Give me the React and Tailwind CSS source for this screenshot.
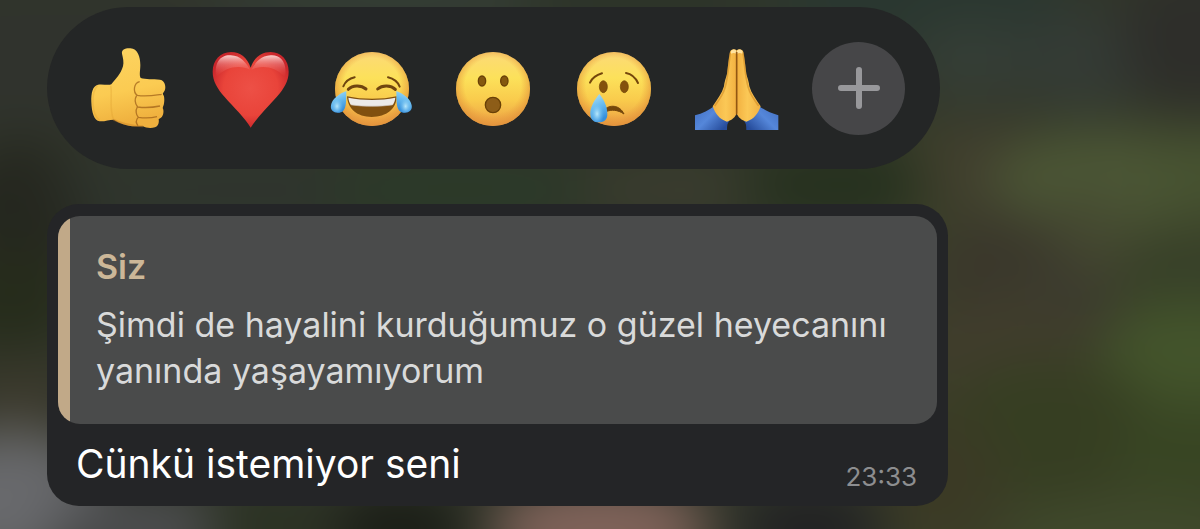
import React, { useState } from "react";

// soft colour patches of the blurred wallpaper: [cx, cy, rx, ry, colour]
const patches = [
  [60, 60, 260, 70, "#30332d"],
  [20, 210, 70, 70, "#25271f"],
  [10, 300, 70, 50, "#262c1b"],
  [250, 190, 200, 30, "#2e342e"],
  [400, 0, 200, 20, "#35403a"],
  [460, 190, 140, 30, "#2a3a28"],
  [640, 0, 120, 20, "#293229"],
  [680, 190, 100, 30, "#3a3c2e"],
  [840, 185, 100, 34, "#25311d"],
  [920, 0, 150, 60, "#2a3730"],
  [970, 60, 60, 40, "#353e36"],
  [1080, 60, 70, 50, "#343b35"],
  [1200, 40, 80, 70, "#2e2e2a"],
  [990, 170, 70, 50, "#413f2e"],
  [1110, 180, 120, 50, "#4b5635"],
  [1210, 175, 60, 45, "#475331"],
  [1080, 240, 50, 45, "#454931"],
  [1000, 275, 70, 60, "#3a372b"],
  [1060, 300, 60, 40, "#3c3b2e"],
  [1190, 275, 70, 40, "#374028"],
  [1000, 350, 90, 50, "#403d2c"],
  [1190, 355, 90, 55, "#43542b"],
  [1050, 430, 110, 70, "#363e22"],
  [1190, 450, 80, 50, "#384523"],
  [940, 480, 60, 70, "#3b3a25"],
  [1130, 540, 120, 40, "#404a2c"],
  [20, 400, 60, 40, "#3b392c"],
  [10, 500, 100, 70, "#68696c"],
  [140, 530, 90, 40, "#4c4d4f"],
  [270, 530, 60, 40, "#2b3223"],
  [400, 530, 70, 40, "#1a1d16"],
  [600, 530, 110, 50, "#80635a"],
  [810, 530, 70, 40, "#212123"],
];

function Wallpaper() {
  return (
    <svg
      className="absolute inset-0 h-full w-full"
      viewBox="0 0 1200 529"
      preserveAspectRatio="none"
      aria-hidden="true"
    >
      <defs>
        <filter id="soft" x="-20%" y="-20%" width="140%" height="140%" colorInterpolationFilters="sRGB">
          <feGaussianBlur stdDeviation="26" />
        </filter>
      </defs>
      <rect width="1200" height="529" fill="#30352b" />
      <g filter="url(#soft)">
        <rect x="-100" y="-100" width="1400" height="729" fill="#31362a" />
        <rect x="900" y="120" width="400" height="509" fill="#3c4129" />
        {patches.map(([cx, cy, rx, ry, color]) => (
          <ellipse key={`${cx}-${cy}`} cx={cx} cy={cy} rx={rx} ry={ry} fill={color} />
        ))}
      </g>
    </svg>
  );
}

function EmojiDefs() {
  return (
    <svg className="absolute h-0 w-0" aria-hidden="true">
      <defs>
        <linearGradient id="face" x1="0" y1="0" x2="0" y2="1">
          <stop offset="0" stopColor="#fcd978" />
          <stop offset="0.35" stopColor="#fce15a" />
          <stop offset="0.65" stopColor="#f9cb4c" />
          <stop offset="1" stopColor="#ec9f45" />
        </linearGradient>
        <radialGradient id="faceEdge" cx="0.5" cy="0.46" r="0.54">
          <stop offset="0.7" stopColor="#e8963a" stopOpacity="0" />
          <stop offset="1" stopColor="#e0903a" stopOpacity="0.8" />
        </radialGradient>
        <linearGradient id="tear" x1="0" y1="0" x2="0.3" y2="1">
          <stop offset="0" stopColor="#b5e4f5" />
          <stop offset="0.5" stopColor="#6bbdf0" />
          <stop offset="1" stopColor="#358fdd" />
        </linearGradient>
        <radialGradient id="tearShine" cx="0.4" cy="0.7" r="0.4">
          <stop offset="0" stopColor="#b9e8fb" />
          <stop offset="1" stopColor="#6bbdf0" stopOpacity="0" />
        </radialGradient>
        <linearGradient id="skin" x1="0" y1="0" x2="0.2" y2="1">
          <stop offset="0" stopColor="#fcd462" />
          <stop offset="0.6" stopColor="#fbcb52" />
          <stop offset="1" stopColor="#efb03e" />
        </linearGradient>
        <radialGradient id="heart" cx="0.5" cy="0.48" r="0.55">
          <stop offset="0" stopColor="#ed5046" />
          <stop offset="0.65" stopColor="#e9443a" />
          <stop offset="1" stopColor="#c9262b" />
        </radialGradient>
        <linearGradient id="gloss" x1="0" y1="0" x2="0" y2="1">
          <stop offset="0" stopColor="#ffe3e0" stopOpacity="0.9" />
          <stop offset="0.4" stopColor="#f59a98" stopOpacity="0.5" />
          <stop offset="1" stopColor="#ed5046" stopOpacity="0" />
        </linearGradient>
        <linearGradient id="palm" x1="0" y1="0" x2="1" y2="0">
          <stop offset="0" stopColor="#f2b244" />
          <stop offset="0.55" stopColor="#fbc856" />
          <stop offset="1" stopColor="#f2b040" />
        </linearGradient>
        <linearGradient id="sleeve" x1="0" y1="0" x2="1" y2="0.7">
          <stop offset="0" stopColor="#416ec0" />
          <stop offset="0.5" stopColor="#5587da" />
          <stop offset="1" stopColor="#274d9c" />
        </linearGradient>
        <filter id="smooth" x="-20%" y="-20%" width="140%" height="140%" colorInterpolationFilters="sRGB">
          <feGaussianBlur stdDeviation="2" />
        </filter>
      </defs>
    </svg>
  );
}

function Emoji({ children }) {
  return (
    <svg className="h-[105px] w-[100px]" viewBox="0 0 300 315" aria-hidden="true">
      {children}
    </svg>
  );
}

function Face() {
  return (
    <>
      <circle cx="150" cy="159" r="111" fill="url(#face)" />
      <circle cx="150" cy="159" r="111" fill="url(#faceEdge)" />
    </>
  );
}

function ThumbsUp() {
  return (
    <Emoji>
      <path
        d="M54 146C38 150 33 170 34 198c1 31 8 56 25 58 15 1 29-5 42-5 18 10 36 19 66 20h22c9 5 24 6 36 3 9-3 13-13 11-25 10-3 16-14 14-28-2-4-2-6-1-9 4-5 6-29 1-35-2-3-2-5 1-8 10-11 5-36-11-38-22-2-43 0-58-5-5-9-1-22-1-39 0-24-8-49-30-50-15-1-27 4-25 16 3 14 6 24 3 38-7 24-22 38-35 54-9 4-24-1-40 1Z"
        fill="url(#skin)"
      />
      <path d="M92 150c6 20-6 70 9 101M53 148c-20 20-20 86 6 106" fill="none" stroke="#db9a2b" strokeWidth="5" opacity="0.28" filter="url(#smooth)" />
      <path d="M100 251c24 12 46 19 89 20" fill="none" stroke="#c97f22" strokeWidth="6" opacity="0.4" filter="url(#smooth)" />
      <g fill="none" stroke="#9b5c16" strokeWidth="4" opacity="0.7" filter="url(#smooth)">
        <path d="M179 137c-18 4-21 31-7 41 25 5 52 0 73-3" />
        <path d="M170 178c-7 12-4 26 3 35 24 3 48 1 67-3" />
        <path d="M172 213c-6 10-4 24 3 31 20 3 40 2 56-2" />
        <path d="M174 245c-7 8-6 17 0 24" />
      </g>
    </Emoji>
  );
}

function Heart() {
  return (
    <Emoji>
      <path
        d="M149 275C132 246 98 214 71 183 49 158 35 135 35 107c0-34 23-59 55-59 28 0 49 17 59 47 10-30 32-47 60-47 32 0 54 25 54 59 0 28-14 51-36 76-28 31-60 63-78 92Z"
        fill="url(#heart)"
      />
      <path d="M46 124C38 78 60 56 89 58c30 1 45 21 58 43-25-12-68-14-101 23Z" fill="url(#gloss)" filter="url(#smooth)" />
      <path d="M252 124c8-46-14-68-43-66-30 1-45 21-58 43 25-12 68-14 101 23Z" fill="url(#gloss)" filter="url(#smooth)" />
    </Emoji>
  );
}

function Joy() {
  return (
    <Emoji>
      <Face />
      <g fill="none" stroke="#70450f" strokeLinecap="round">
        <path d="M64 151c6-14 16-23 34-27M198 124c17 4 29 13 35 28" strokeWidth="6" />
        <path d="M79 160c12-13 38-14 53-1M167 159c14-13 40-12 53 1" strokeWidth="9" />
      </g>
      <path d="M75 181c47 10 104 10 149 0 0 37-30 62-75 62-44 0-72-25-74-62Z" fill="#80500f" />
      <path d="M79 185c46 9 97 9 141 0-1 8-3 14-7 21-39 6-87 6-127 0-4-7-6-13-7-21Z" fill="#eceae8" />
      <path d="M88 207c38 5 85 5 123 0" fill="none" stroke="#c9bdb4" strokeWidth="2" />
      <g id="joy-tear">
        <path d="M73 165c-23 9-43 24-46 43-3 16 10 24 25 22 23-3 20-32 21-65Z" fill="url(#tear)" />
        <path d="M73 165c-23 9-43 24-46 43-3 16 10 24 25 22 23-3 20-32 21-65Z" fill="url(#tearShine)" />
      </g>
      <use href="#joy-tear" transform="matrix(-1 0 0 1 296 0)" />
    </Emoji>
  );
}

function Surprised() {
  return (
    <Emoji>
      <Face />
      <g fill="#84580f" stroke="#694006" strokeWidth="4">
        <ellipse cx="117" cy="135" rx="11" ry="15" />
        <ellipse cx="184" cy="135" rx="11" ry="15" />
        <circle cx="150" cy="207" r="23" fill="#8d5d18" />
      </g>
    </Emoji>
  );
}

function Crying() {
  return (
    <Emoji>
      <Face />
      <g fill="#84510d" stroke="#6c4208" strokeWidth="2">
        <ellipse cx="118" cy="152" rx="12" ry="18" />
        <ellipse cx="181" cy="152" rx="12" ry="18" />
      </g>
      <g fill="none" stroke="#74460b" strokeLinecap="round">
        <path d="M78 140c7-15 19-23 36-28M186 111c16 3 28 13 36 30" strokeWidth="6" />
      </g>
      <path d="M120 222c16-17 47-16 60 12-19-13-38-14-54-7Z" fill="#74460b" stroke="#74460b" strokeWidth="3" strokeLinejoin="round" />
      <path d="M106 174c-13 16-29 39-27 62 1 16 12 23 26 23 15 0 26-9 25-26 0-23-11-43-24-59Z" fill="url(#tear)" />
      <path d="M106 174c-13 16-29 39-27 62 1 16 12 23 26 23 15 0 26-9 25-26 0-23-11-43-24-59Z" fill="url(#tearShine)" />
    </Emoji>
  );
}

function Pray() {
  return (
    <Emoji>
      <g id="pray-half">
        <path d="M30 238c22-6 43-16 59-29l44 46c-6 6-7 14-7 27H30Z" fill="url(#sleeve)" />
        <path
          d="M155 43c-6-6-18-4-20 5-4 20-6 43-9 66-3 12-8 24-9 37-6 21-20 40-34 60 8 22 20 39 43 46 14-4 26-14 29-26Z"
          fill="url(#palm)"
        />
        <path d="M136 50c-6 45-7 76-16 105-5 20-19 39-31 55" fill="none" stroke="#c57b17" strokeWidth="5" opacity="0.45" filter="url(#smooth)" />
        <path d="M138 45c4-6 12-6 16-1v9c-5-3-11-3-16 0Z" fill="#ffe3a0" />
      </g>
      <use href="#pray-half" transform="matrix(-1 0 0 1 310 0)" />
      <path d="M155 48V233L156 233" fill="none" stroke="#8a4c0c" strokeWidth="5" opacity="0.85" />
    </Emoji>
  );
}

const reactions = [
  { name: "Beğen", Icon: ThumbsUp },
  { name: "Kalp", Icon: Heart },
  { name: "Gülmekten ağlayan", Icon: Joy },
  { name: "Şaşkın", Icon: Surprised },
  { name: "Ağlayan", Icon: Crying },
  { name: "Dua", Icon: Pray },
];

function ReactionBar() {
  const [selected, setSelected] = useState(null);

  return (
    <div className="flex h-[162px] w-fit items-center gap-[21px] rounded-full bg-[#242626] pr-[35px] pl-[33px]">
      {reactions.map(({ name, Icon }) => (
        <button
          key={name}
          type="button"
          aria-label={name}
          aria-pressed={selected === name}
          onClick={() => setSelected(name)}
          className="shrink-0 cursor-pointer"
        >
          <Icon />
        </button>
      ))}
      <button
        type="button"
        aria-label="Daha fazla"
        className="ml-1.5 flex size-[93px] shrink-0 cursor-pointer items-center justify-center rounded-full bg-[#464648]"
      >
        <svg className="size-[42px]" viewBox="0 0 42 42" aria-hidden="true">
          <path d="M21 3v36M3 21h36" stroke="#98989b" strokeWidth="6" strokeLinecap="round" />
        </svg>
      </button>
    </div>
  );
}

function MessageBubble({ author, quote, text, time }) {
  return (
    <article className="w-full max-w-[901px] rounded-[32px] bg-[#242527] px-[11px] pt-3 pb-[13px]">
      <blockquote className="flex overflow-hidden rounded-[22px] bg-[#4a4b4b]">
        <div className="w-3 shrink-0 bg-[#c1a988]" />
        <div className="flex flex-col gap-3 pt-7 pr-6 pb-[30px] pl-[26px] text-[34px] leading-[46px]">
          <cite className="font-semibold text-[#ccb798] not-italic">{author}</cite>
          <p className="text-[#d9dada]">{quote}</p>
        </div>
      </blockquote>
      <div className="flex items-end justify-between pt-4 pr-5 pl-[18px]">
        <p className="pb-[5px] text-[39px] leading-[48px] text-white">{text}</p>
        <time className="text-[26px] leading-8 text-[#8d8e90]">{time}</time>
      </div>
    </article>
  );
}

export default function App() {
  return (
    <main className="relative min-h-screen overflow-hidden bg-[#30352b] font-['Inter',sans-serif]">
      <Wallpaper />
      <EmojiDefs />
      <div className="relative flex flex-col gap-[35px] px-[47px] pt-[7px] pb-[23px]">
        <ReactionBar />
        <MessageBubble
          author="Siz"
          quote="Şimdi de hayalini kurduğumuz o güzel heyecanını yanında yaşayamıyorum"
          text="Cünkü istemiyor seni"
          time="23:33"
        />
      </div>
    </main>
  );
}
